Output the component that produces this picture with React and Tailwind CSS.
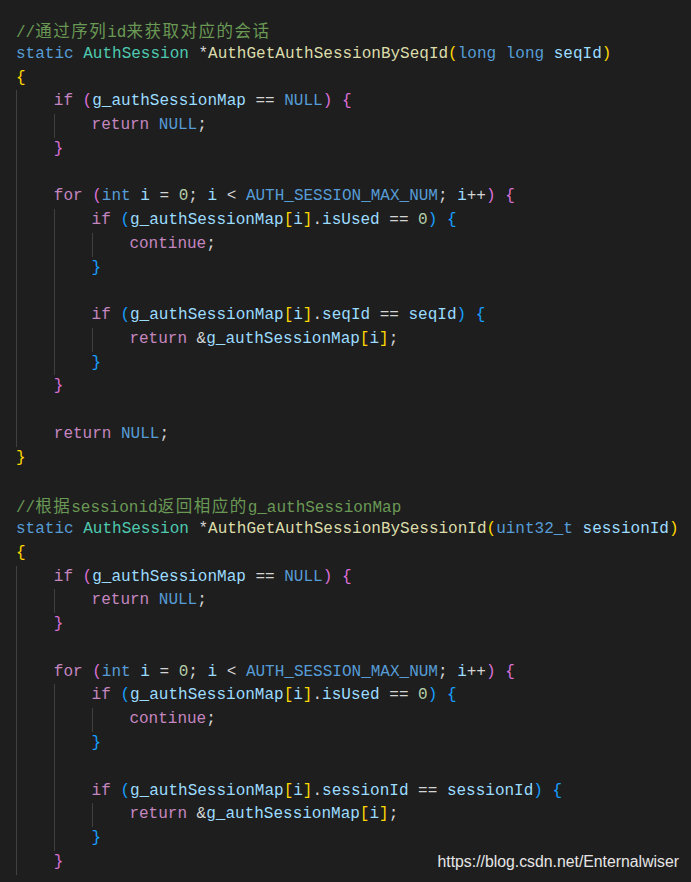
const cm = "text-[#6A9955]";
const kw = "text-[#569CD6]";
const ty = "text-[#4EC9B0]";
const fn = "text-[#DCDCAA]";
const v = "text-[#9CDCFE]";
const ctl = "text-[#C586C0]";
const num = "text-[#B5CEA8]";
const p = "text-[#D4D4D4]";
const b1 = "text-[#FFD700]";
const b2 = "text-[#DA70D6]";
const b3 = "text-[#179FFF]";

// one function body, shared by both functions
const body = (field) => [
  { ind: 1, t: [["if", ctl], [" ", p], ["(", b2], ["g_authSessionMap", v], [" == ", p], ["NULL", kw], [")", b2], [" ", p], ["{", b2]] },
  { ind: 2, t: [["return", ctl], [" ", p], ["NULL", kw], [";", p]] },
  { ind: 1, t: [["}", b2]] },
  { ind: 1, t: [] },
  {
    ind: 1,
    t: [
      ["for", ctl], [" ", p], ["(", b2], ["int", kw], [" ", p], ["i", v], [" = ", p], ["0", num], ["; ", p],
      ["i", v], [" < ", p], ["AUTH_SESSION_MAX_NUM", kw], ["; ", p], ["i", v], ["++", p], [")", b2], [" ", p], ["{", b2],
    ],
  },
  {
    ind: 2,
    t: [
      ["if", ctl], [" ", p], ["(", b3], ["g_authSessionMap", v], ["[", b1], ["i", v], ["]", b1], [".", p],
      ["isUsed", v], [" == ", p], ["0", num], [")", b3], [" ", p], ["{", b3],
    ],
  },
  { ind: 3, t: [["continue", ctl], [";", p]] },
  { ind: 2, t: [["}", b3]] },
  { ind: 2, t: [] },
  {
    ind: 2,
    t: [
      ["if", ctl], [" ", p], ["(", b3], ["g_authSessionMap", v], ["[", b1], ["i", v], ["]", b1], [".", p],
      [field, v], [" == ", p], [field, v], [")", b3], [" ", p], ["{", b3],
    ],
  },
  { ind: 3, t: [["return", ctl], [" ", p], ["&", p], ["g_authSessionMap", v], ["[", b1], ["i", v], ["]", b1], [";", p]] },
  { ind: 2, t: [["}", b3]] },
  { ind: 1, t: [["}", b2]] },
];

const lines = [
  { ind: 0, t: [["//通过序列id来获取对应的会话", cm]] },
  {
    ind: 0,
    t: [
      ["static", kw], [" ", p], ["AuthSession", ty], [" ", p], ["*", p], ["AuthGetAuthSessionBySeqId", fn],
      ["(", b1], ["long long", kw], [" ", p], ["seqId", v], [")", b1],
    ],
  },
  { ind: 0, t: [["{", b1]] },
  ...body("seqId"),
  { ind: 1, t: [] },
  { ind: 1, t: [["return", ctl], [" ", p], ["NULL", kw], [";", p]] },
  { ind: 0, t: [["}", b1]] },
  { ind: 0, t: [] },
  { ind: 0, t: [["//根据sessionid返回相应的g_authSessionMap", cm]] },
  {
    ind: 0,
    t: [
      ["static", kw], [" ", p], ["AuthSession", ty], [" ", p], ["*", p], ["AuthGetAuthSessionBySessionId", fn],
      ["(", b1], ["uint32_t", kw], [" ", p], ["sessionId", v], [")", b1],
    ],
  },
  { ind: 0, t: [["{", b1]] },
  ...body("sessionId"),
];

// split CJK runs so they can get their own width
const Token = ({ text, color }) => {
  const parts = text.split(/([\u4e00-\u9fff]+)/);
  return (
    <span className={color}>
      {parts.map((s, i) =>
        /[\u4e00-\u9fff]/.test(s) ? (
          <span key={i} className="text-[16.5px] tracking-[1.5px] font-['Noto_Sans_CJK_SC',sans-serif]">
            {s}
          </span>
        ) : (
          <span key={i}>{s}</span>
        )
      )}
    </span>
  );
};

const Line = ({ ind, t }) => (
  <div className="flex h-[23.77px] items-stretch whitespace-pre">
    {Array.from({ length: ind }).map((_, i) => (
      <span key={i} className="w-[37.8px] shrink-0 border-l border-[#404040]" />
    ))}
    <span className="leading-[23.77px]">
      {t.map(([text, color], i) => (
        <Token key={i} text={text} color={color} />
      ))}
    </span>
  </div>
);

export default function App() {
  return (
    <div className="relative h-[882px] w-[691px] overflow-hidden bg-[#1e1e1e] pl-[16px] pt-[19px] font-['Liberation_Mono',monospace] text-[16px] text-[#D4D4D4]">
      {lines.map((l, i) => (
        <Line key={i} ind={l.ind} t={l.t} />
      ))}
      <div className="absolute bottom-[11px] right-[12px] font-['Liberation_Sans',Arial,sans-serif] text-[15.8px] leading-[18px] text-[#e6e6e6]">
        https://blog.csdn.net/Enternalwiser
      </div>
    </div>
  );
}
